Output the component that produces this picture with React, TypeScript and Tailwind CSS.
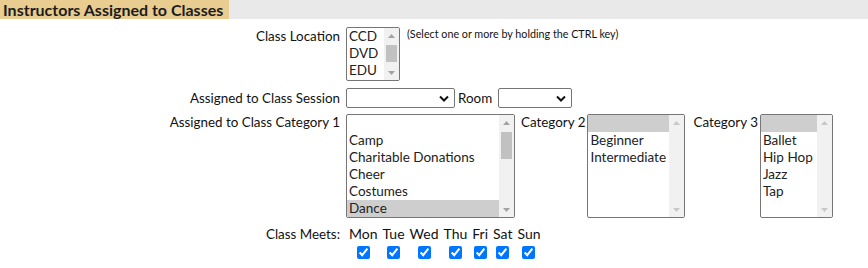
import React from 'react';

type ListProps = {
  width: string;
  height: string;
  items: string[];
  selected?: number;
  thumb?: string;
};

function Arrow({ up, dim }: { up?: boolean; dim?: boolean }) {
  return (
    <svg width="7" height="4" viewBox="0 0 7 4" className={dim ? 'fill-[#c8c8c8]' : 'fill-[#a3a3a3]'}>
      {up ? <polygon points="0,4 7,4 3.5,0" /> : <polygon points="0,0 7,0 3.5,4" />}
    </svg>
  );
}

function ListBox({ width, height, items, selected, thumb }: ListProps) {
  return (
    <div className={`flex ${width} ${height} border border-[#767676] rounded-[2px] bg-white overflow-hidden`}>
      <div className="flex-1 flex flex-col">
        {items.map((item, i) => (
          <div
            key={i}
            className={`h-[17px] leading-[17px] pl-[2px] text-[13.5px] text-[#222] whitespace-nowrap ${
              i === selected ? 'bg-[#cecece]' : ''
            }`}
          >
            {item}
          </div>
        ))}
      </div>
      <div className="w-[15px] bg-[#f1f1f1] flex flex-col items-center">
        <div className="h-[15px] flex items-center justify-center">
          <Arrow up dim={!thumb} />
        </div>
        <div className="flex-1 w-full px-[2px] flex flex-col">
          {thumb && <div className={`${thumb} w-full bg-[#c1c1c1]`} />}
        </div>
        <div className="h-[15px] flex items-center justify-center">
          <Arrow dim={!thumb} />
        </div>
      </div>
    </div>
  );
}

function Select({ width }: { width: string }) {
  return (
    <div className={`${width} h-[20px] border border-[#767676] rounded-[2px] bg-white flex items-center justify-end pr-[5px]`}>
      <svg width="10" height="7" viewBox="0 0 10 7" fill="none" stroke="#111" strokeWidth="2">
        <path d="M1 1.5l4 4 4-4" />
      </svg>
    </div>
  );
}

const days = ['Mon', 'Tue', 'Wed', 'Thu', 'Fri', 'Sat', 'Sun'];

export default function App() {
  return (
    <div className="w-[868px] h-[268px] bg-white text-[13.4px] text-[#111]" style={{ fontFamily: 'Lato, "Open Sans", sans-serif' }}>
      {/* Section header */}
      <div className="flex h-[19px] bg-[#e9e9e9]">
        <div className="bg-[#e8cc90] pl-[3px] pr-[6px] text-[16px] font-bold leading-[20px] text-[#1c1c1c]">
          Instructors Assigned to Classes
        </div>
      </div>

      {/* Class Location */}
      <div className="flex mt-[8px]">
        <div className="w-[340px] text-right pt-[1px] leading-[17px]">Class Location</div>
        <div className="ml-[6px]">
          <ListBox width="w-[54px]" height="h-[54px]" items={['CCD', 'DVD', 'EDU']} thumb="h-[17px] mt-[2px]" />
        </div>
        <div className="ml-[7px] text-[10.75px] leading-[14px] text-[#111]">(Select one or more by holding the CTRL key)</div>
      </div>

      {/* Session + Room */}
      <div className="flex items-center mt-[7px]">
        <div className="w-[340px] text-right">Assigned to Class Session</div>
        <div className="ml-[6px]">
          <Select width="w-[109px]" />
        </div>
        <span className="ml-[3px]">Room</span>
        <div className="ml-[6px]">
          <Select width="w-[74px]" />
        </div>
      </div>

      {/* Categories */}
      <div className="flex mt-[6px]">
        <div className="w-[340px] text-right leading-[17px]">Assigned to Class Category 1</div>
        <div className="ml-[6px]">
          <ListBox
            width="w-[169px]"
            height="h-[104px]"
            items={['', 'Camp', 'Charitable Donations', 'Cheer', 'Costumes', 'Dance']}
            selected={5}
            thumb="h-[27px] mt-[2px]"
          />
        </div>
        <div className="ml-[6px] leading-[17px]">Category 2</div>
        <div className="ml-[2px]">
          <ListBox width="w-[98px]" height="h-[104px]" items={['', 'Beginner', 'Intermediate']} selected={0} />
        </div>
        <div className="ml-[8px] leading-[17px]">Category 3</div>
        <div className="ml-[2px]">
          <ListBox width="w-[73px]" height="h-[104px]" items={['', 'Ballet', 'Hip Hop', 'Jazz', 'Tap']} selected={0} />
        </div>
      </div>

      {/* Class Meets */}
      <div className="flex mt-[8px]">
        <div className="w-[340px] text-right leading-[16px]">Class Meets:</div>
        <div className="flex gap-[5px] ml-[9px]">
          {days.map((d) => (
            <div key={d} className="flex flex-col items-center">
              <span className="text-[14px] leading-[16px]">{d}</span>
              <input type="checkbox" defaultChecked className="w-[13px] h-[13px] mt-[4px] accent-[#0075ff]" />
            </div>
          ))}
        </div>
      </div>
    </div>
  );
}
